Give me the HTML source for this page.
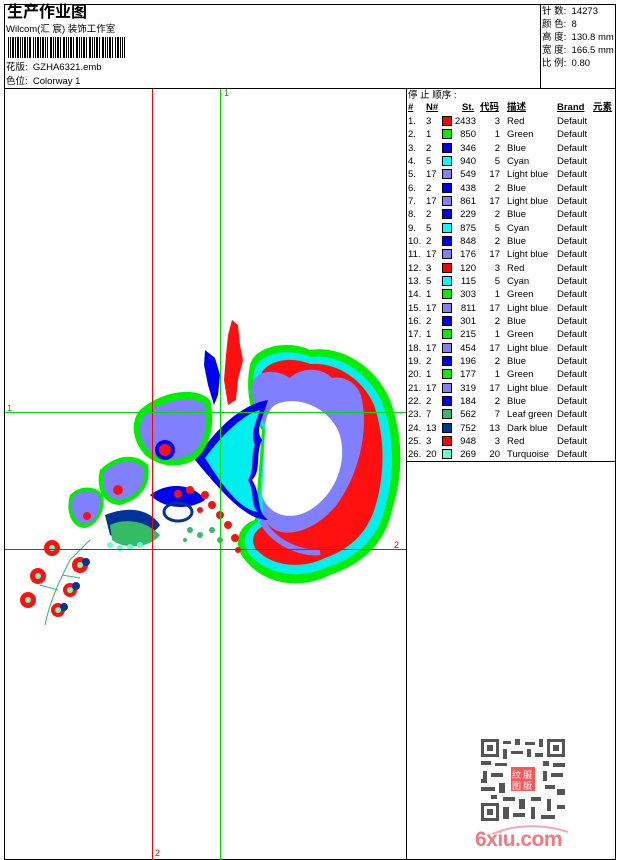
<!DOCTYPE html>
<html><head><meta charset="utf-8">
<style>
*{margin:0;padding:0;box-sizing:border-box}
body{width:620px;height:860px;background:#fff;position:relative;overflow:hidden;font-family:"Liberation Sans","Noto Sans CJK SC",sans-serif;color:#000}
.a{position:absolute;white-space:nowrap}
.t{font-size:9.5px;line-height:11px}
.sw{position:absolute;width:10px;height:10px;border:1px solid #000}
.r{position:absolute;font-size:9.5px;line-height:11px;white-space:nowrap}
</style></head><body>
<!-- frames -->
<div class="a" style="left:4px;top:4px;width:612px;height:856px;border:1px solid #000"></div>
<div class="a" style="left:4px;top:88px;width:612px;height:1px;background:#000"></div>
<div class="a" style="left:540px;top:4px;width:1px;height:84px;background:#000"></div>
<div class="a" style="left:406px;top:88px;width:1px;height:772px;background:#000"></div>
<div class="a" style="left:406px;top:461px;width:210px;height:1px;background:#000"></div>

<div class="a" style="left:7px;top:4px;font-size:16px;font-weight:bold;line-height:18px">生产作业图</div>
<div class="a t" style="left:6px;top:24px">Wilcom(汇 宸) 装饰工作室</div>
<svg class="a" style="left:8px;top:37px" width="120" height="21">
<g fill="#000">
<rect x="0" y="0" width="1" height="21"/><rect x="2" y="0" width="1" height="21"/><rect x="4" y="0" width="2" height="21"/><rect x="7" y="0" width="1" height="21"/><rect x="9" y="0" width="2" height="21"/><rect x="12" y="0" width="1" height="21"/><rect x="14" y="0" width="1" height="21"/><rect x="16" y="0" width="2" height="21"/><rect x="19" y="0" width="1" height="21"/><rect x="21" y="0" width="2" height="21"/><rect x="25" y="0" width="1" height="21"/><rect x="27" y="0" width="1" height="21"/><rect x="29" y="0" width="2" height="21"/><rect x="32" y="0" width="1" height="21"/><rect x="34" y="0" width="2" height="21"/><rect x="37" y="0" width="1" height="21"/><rect x="39" y="0" width="1" height="21"/><rect x="42" y="0" width="2" height="21"/><rect x="45" y="0" width="1" height="21"/><rect x="47" y="0" width="1" height="21"/><rect x="49" y="0" width="2" height="21"/><rect x="52" y="0" width="1" height="21"/><rect x="55" y="0" width="2" height="21"/><rect x="58" y="0" width="1" height="21"/><rect x="60" y="0" width="1" height="21"/><rect x="62" y="0" width="2" height="21"/><rect x="65" y="0" width="1" height="21"/><rect x="68" y="0" width="2" height="21"/><rect x="71" y="0" width="1" height="21"/><rect x="73" y="0" width="1" height="21"/><rect x="75" y="0" width="2" height="21"/><rect x="78" y="0" width="1" height="21"/><rect x="81" y="0" width="2" height="21"/><rect x="84" y="0" width="1" height="21"/><rect x="86" y="0" width="1" height="21"/><rect x="88" y="0" width="2" height="21"/><rect x="91" y="0" width="1" height="21"/><rect x="94" y="0" width="2" height="21"/><rect x="97" y="0" width="1" height="21"/><rect x="99" y="0" width="1" height="21"/><rect x="101" y="0" width="2" height="21"/><rect x="104" y="0" width="1" height="21"/><rect x="107" y="0" width="1" height="21"/><rect x="109" y="0" width="2" height="21"/><rect x="112" y="0" width="1" height="21"/><rect x="114" y="0" width="1" height="21"/><rect x="116" y="0" width="1" height="21"/>
</g></svg>
<div class="a t" style="left:6px;top:62px">花版:&nbsp; GZHA6321.emb</div>
<div class="a t" style="left:6px;top:76px">色位:&nbsp; Colorway 1</div>

<div class="a t" style="left:542px;top:6px">针 数:&nbsp; 14273</div>
<div class="a t" style="left:542px;top:19px">颜 色:&nbsp; 8</div>
<div class="a t" style="left:542px;top:32px">高 度:&nbsp; 130.8 mm</div>
<div class="a t" style="left:542px;top:45px">宽 度:&nbsp; 166.5 mm</div>
<div class="a t" style="left:542px;top:58px">比 例:&nbsp; 0.80</div>

<!-- design area -->
<svg class="a" style="left:5px;top:89px" width="401" height="771" viewBox="5 89 401 771">
<!-- big flower -->
<path d="M250,365 C255,345 290,340 310,350 C340,345 375,365 390,400 C405,440 402,480 392,510 C385,545 360,565 330,575 C300,590 265,585 245,560 C232,545 238,525 255,520 L262,430 C250,415 245,390 250,365Z" fill="#00ee00"/>
<path d="M255,368 C262,352 290,348 310,357 C338,353 368,372 382,402 C396,440 394,478 385,508 C378,540 355,558 328,567 C300,580 268,575 250,555 C240,542 245,530 258,522 L265,430 C255,415 250,392 255,368Z" fill="#00eeee"/>
<path d="M262,372 C270,360 292,356 310,364 C336,362 362,378 374,405 C386,440 384,476 376,504 C368,534 348,550 325,558 C300,570 270,566 255,548 C250,538 255,530 265,525 L268,430 C262,412 258,390 262,372Z" fill="#ff1010"/>
<path d="M252,385 C255,370 275,368 290,378 C300,368 320,366 332,378 C345,375 360,385 362,400 C368,430 360,470 340,500 C320,530 280,545 265,520 C260,505 264,470 268,430 C258,415 250,400 252,385Z" fill="#8080ff"/>
<path d="M275,405 C295,395 325,405 338,430 C350,460 335,495 310,510 C290,522 268,515 262,495 L265,430 C265,420 268,410 275,405Z" fill="#fff"/>
<path d="M262,520 C270,540 300,555 320,552" stroke="#8080ff" stroke-width="6" fill="none"/>
<!-- cyan leaf -->
<path d="M195,460 C215,430 240,405 268,400 C262,420 255,430 262,440 C255,455 262,470 252,480 C262,495 255,510 268,520 C245,520 220,490 195,460Z" fill="#0000ee"/>
<path d="M205,458 C222,435 242,415 260,410 C255,425 250,435 255,445 C250,458 255,470 248,480 C255,492 250,505 258,512 C240,510 222,485 205,458Z" fill="#00eeee"/>
<!-- red spike top -->
<path d="M232,320 L238,325 L240,345 L243,360 L238,380 L236,400 L228,405 L224,380 L226,355 L228,335Z" fill="#ff1010"/>
<path d="M205,350 L215,358 L220,375 L218,395 L214,405 L208,385 L204,365Z" fill="#0000ee"/>
<!-- left leaves -->
<path d="M140,410 C160,392 195,385 210,400 C215,420 212,440 200,455 C185,470 160,468 145,455 C132,440 130,422 140,410Z" fill="#00ee00"/>
<path d="M145,415 C162,400 192,394 205,405 C208,422 205,440 196,450 C183,462 162,462 150,452 C138,440 137,425 145,415Z" fill="#8080ff"/>
<circle cx="165" cy="450" r="10" fill="#0000ee"/><circle cx="165" cy="450" r="6" fill="#ff1010"/>
<path d="M100,470 C115,455 135,452 148,465 C152,485 140,500 120,505 C105,505 95,490 100,470Z" fill="#00ee00"/>
<path d="M104,472 C117,460 133,458 144,468 C146,484 137,496 120,500 C108,500 100,488 104,472Z" fill="#8080ff"/>
<circle cx="118" cy="490" r="5" fill="#ff1010"/>
<path d="M70,495 C80,485 95,485 103,495 C106,510 98,525 85,528 C72,528 65,512 70,495Z" fill="#00ee00"/>
<path d="M73,497 C82,489 94,489 100,497 C102,510 96,522 85,524 C75,523 69,511 73,497Z" fill="#8080ff"/>
<circle cx="87" cy="516" r="4" fill="#ff1010"/>
<!-- dark blue / green middle -->
<path d="M105,515 C130,505 150,510 160,525 C150,540 125,545 110,535Z" fill="#003399"/>
<path d="M110,525 C125,518 145,520 160,535 C150,548 125,550 112,540Z" fill="#33bb66"/>
<path d="M150,495 C170,480 195,485 205,500 C190,510 165,510 150,495Z" fill="#0000ee"/>
<ellipse cx="178" cy="512" rx="14" ry="9" fill="none" stroke="#003399" stroke-width="3"/>
<g fill="#ff1010">
<circle cx="178" cy="494" r="4"/><circle cx="190" cy="490" r="4"/><circle cx="205" cy="495" r="4"/><circle cx="212" cy="505" r="4"/><circle cx="220" cy="515" r="4"/><circle cx="228" cy="525" r="4"/><circle cx="235" cy="538" r="4"/><circle cx="238" cy="550" r="3"/><circle cx="200" cy="510" r="3"/>
</g>
<g fill="#33bb66"><circle cx="190" cy="530" r="3"/><circle cx="200" cy="535" r="3"/><circle cx="212" cy="530" r="3"/><circle cx="220" cy="540" r="3"/><circle cx="185" cy="540" r="2"/></g>
<g fill="#66ffcc"><circle cx="110" cy="545" r="3"/><circle cx="120" cy="548" r="3"/><circle cx="130" cy="547" r="3"/><circle cx="140" cy="545" r="3"/></g>
<!-- bottom-left flowers -->
<path d="M45,625 C50,600 60,580 70,560 M58,590 L40,585 M62,575 L80,578 M70,560 L90,540" stroke="#33bb66" stroke-width="1" fill="none"/>
<g fill="#ff1010"><circle cx="52" cy="548" r="8"/><circle cx="38" cy="576" r="8"/><circle cx="28" cy="600" r="8"/><circle cx="80" cy="565" r="8"/><circle cx="70" cy="590" r="7"/><circle cx="58" cy="610" r="7"/></g>
<g fill="#003399"><circle cx="86" cy="562" r="4"/><circle cx="76" cy="586" r="4"/><circle cx="64" cy="607" r="4"/></g>
<g fill="#66ffcc"><circle cx="52" cy="548" r="3"/><circle cx="38" cy="576" r="3"/><circle cx="28" cy="600" r="3"/><circle cx="80" cy="565" r="3"/><circle cx="70" cy="590" r="3"/><circle cx="58" cy="610" r="3"/></g>
<!-- guide lines -->
<line x1="152.5" y1="89" x2="152.5" y2="860" stroke="#ff0000"/>
<line x1="220.5" y1="89" x2="220.5" y2="860" stroke="#00dd00"/>
<line x1="5" y1="412.5" x2="406" y2="412.5" stroke="#00dd00"/>
<line x1="5" y1="549.5" x2="406" y2="549.5" stroke="#ff0000"/>
<text x="224" y="96" font-size="9" fill="#00aa00" font-family="Liberation Sans">1</text>
<text x="7" y="411" font-size="9" fill="#00aa00" font-family="Liberation Sans">1</text>
<text x="394" y="548" font-size="9" fill="#ff0000" font-family="Liberation Sans">2</text>
<text x="155" y="856" font-size="9" fill="#ff0000" font-family="Liberation Sans">2</text>
</svg>

<!-- table -->
<div class="a t" style="left:408px;top:90px">停 止 顺序 :</div>
<div class="a" style="left:408px;top:102px;font-size:9.5px;font-weight:bold;text-decoration:underline;line-height:11px">#</div>
<div class="a" style="left:426px;top:102px;font-size:9.5px;font-weight:bold;text-decoration:underline;line-height:11px">N#</div>
<div class="a" style="left:462px;top:102px;font-size:9.5px;font-weight:bold;text-decoration:underline;line-height:11px">St.</div>
<div class="a" style="left:480px;top:102px;font-size:9.5px;font-weight:bold;text-decoration:underline;line-height:11px">代码</div>
<div class="a" style="left:507px;top:102px;font-size:9.5px;font-weight:bold;text-decoration:underline;line-height:11px">描述</div>
<div class="a" style="left:557px;top:102px;font-size:9.5px;font-weight:bold;text-decoration:underline;line-height:11px">Brand</div>
<div class="a" style="left:593px;top:102px;font-size:9.5px;font-weight:bold;text-decoration:underline;line-height:11px">元素</div>

<div id="rows"></div>
<script>
var d=[[3,"#ff0000",2433,"Red"],[1,"#00ee00",850,"Green"],[2,"#0000ee",346,"Blue"],[5,"#00ffff",940,"Cyan"],[17,"#8080ff",549,"Light blue"],[2,"#0000ee",438,"Blue"],[17,"#8080ff",861,"Light blue"],[2,"#0000ee",229,"Blue"],[5,"#00ffff",875,"Cyan"],[2,"#0000ee",848,"Blue"],[17,"#8080ff",176,"Light blue"],[3,"#ff0000",120,"Red"],[5,"#00ffff",115,"Cyan"],[1,"#00ee00",303,"Green"],[17,"#8080ff",811,"Light blue"],[2,"#0000ee",301,"Blue"],[1,"#00ee00",215,"Green"],[17,"#8080ff",454,"Light blue"],[2,"#0000ee",196,"Blue"],[1,"#00ee00",177,"Green"],[17,"#8080ff",319,"Light blue"],[2,"#0000ee",184,"Blue"],[7,"#33bb66",562,"Leaf green"],[13,"#003399",752,"Dark blue"],[3,"#ff0000",948,"Red"],[20,"#66ffcc",269,"Turquoise"]];
var h="";
for(var i=0;i<d.length;i++){var y=Math.round(116+13.33*i);var r=d[i];
h+='<div class="r" style="left:408px;top:'+y+'px">'+(i+1)+'.</div>';
h+='<div class="r" style="left:426px;top:'+y+'px">'+r[0]+'</div>';
h+='<div class="sw" style="left:442px;top:'+(y)+'px;background:'+r[1]+'"></div>';
h+='<div class="r" style="left:440px;width:36px;text-align:right;top:'+y+'px">'+r[2]+'</div>';
h+='<div class="r" style="left:480px;width:20px;text-align:right;top:'+y+'px">'+r[0]+'</div>';
h+='<div class="r" style="left:507px;top:'+y+'px">'+r[3]+'</div>';
h+='<div class="r" style="left:557px;top:'+y+'px">Default</div>';}
document.getElementById("rows").innerHTML=h;
</script>

<!-- QR -->
<svg class="a" style="left:481px;top:739px" width="84" height="82">
<rect width="84" height="82" fill="#fff"/>
<g fill="#555">
<rect x="0" y="0" width="18" height="18"/><rect x="66" y="0" width="18" height="18"/><rect x="0" y="64" width="18" height="18"/>
</g>
<g fill="#fff"><rect x="3" y="3" width="12" height="12"/><rect x="69" y="3" width="12" height="12"/><rect x="3" y="67" width="12" height="12"/></g>
<g fill="#555"><rect x="6" y="6" width="6" height="6"/><rect x="72" y="6" width="6" height="6"/><rect x="6" y="70" width="6" height="6"/>
<rect x="22" y="2" width="8" height="3"/><rect x="34" y="0" width="5" height="6"/><rect x="44" y="3" width="10" height="3"/><rect x="58" y="0" width="4" height="8"/>
<rect x="22" y="10" width="4" height="10"/><rect x="30" y="12" width="12" height="3"/><rect x="46" y="10" width="4" height="8"/><rect x="54" y="14" width="8" height="4"/>
<rect x="0" y="22" width="10" height="4"/><rect x="14" y="24" width="12" height="3"/><rect x="62" y="22" width="6" height="5"/><rect x="72" y="24" width="12" height="4"/>
<rect x="2" y="32" width="4" height="12"/><rect x="10" y="34" width="12" height="4"/><rect x="62" y="32" width="4" height="10"/><rect x="70" y="34" width="12" height="4"/>
<rect x="0" y="48" width="14" height="4"/><rect x="18" y="44" width="6" height="10"/><rect x="64" y="46" width="10" height="4"/><rect x="76" y="50" width="8" height="6"/>
<rect x="22" y="58" width="12" height="4"/><rect x="38" y="60" width="6" height="10"/><rect x="50" y="58" width="10" height="4"/><rect x="66" y="60" width="4" height="12"/>
<rect x="22" y="68" width="6" height="12"/><rect x="32" y="74" width="12" height="4"/><rect x="50" y="68" width="4" height="12"/><rect x="60" y="76" width="14" height="4"/><rect x="76" y="66" width="8" height="4"/>
<rect x="10" y="56" width="6" height="4"/><rect x="0" y="40" width="4" height="4"/>
</g>
<rect x="30" y="28" width="24" height="24" fill="#ff5555"/>
<g fill="#fff" font-size="9" font-family="Noto Sans CJK SC,sans-serif"><text x="31" y="39">纹</text><text x="42" y="39">服</text><text x="31" y="50">图</text><text x="42" y="50">版</text></g>
</svg>
<div class="a" style="left:475px;top:828px;font-size:21px;font-weight:bold;color:#f07a80;font-family:'Liberation Sans',sans-serif;line-height:24px;letter-spacing:-0.5px">6xiu.com</div>
<svg class="a" style="left:490px;top:824px" width="80" height="12"><path d="M2,10 C25,0 55,0 78,8" stroke="#f7a8ad" stroke-width="2" fill="none"/></svg>
</body></html>
